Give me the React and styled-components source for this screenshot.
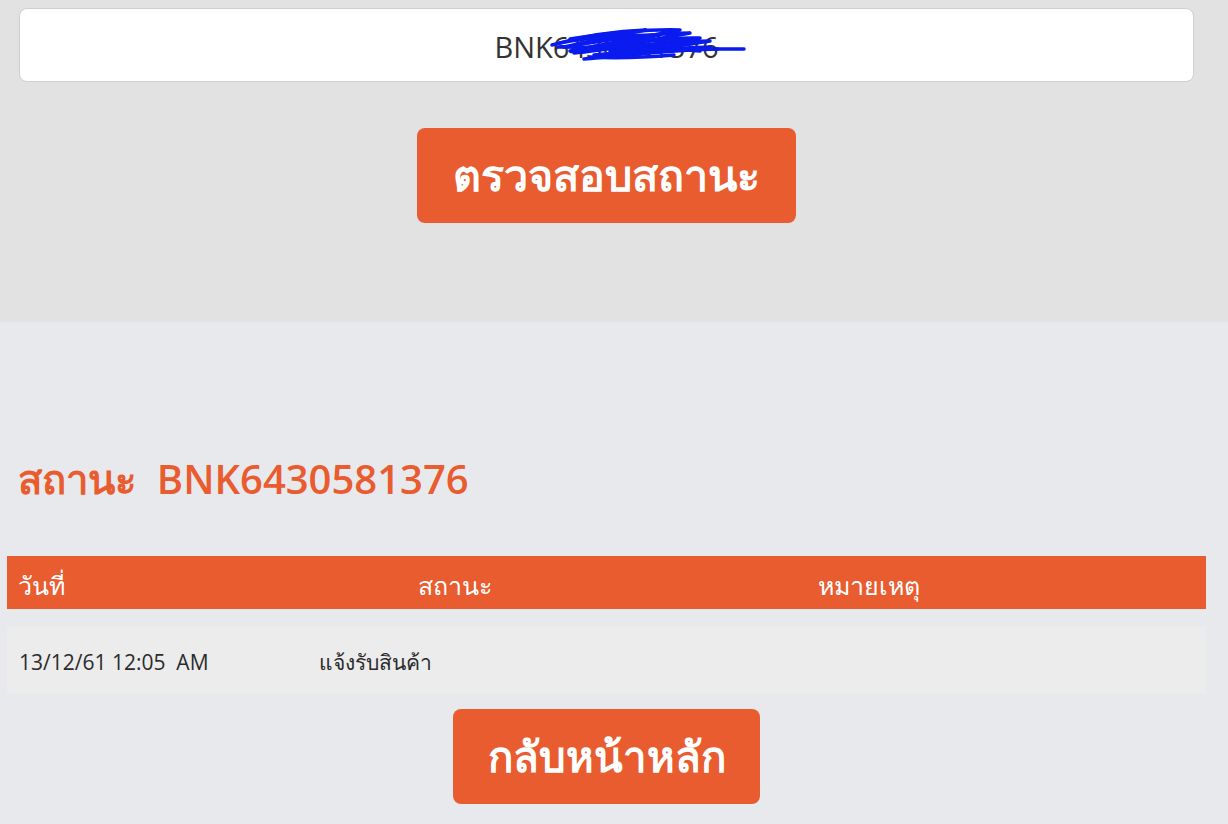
import React from 'react';
import styled, { createGlobalStyle } from 'styled-components';

const GlobalStyle = createGlobalStyle`
    html, body {
        margin: 0;
        padding: 0;
        background: #e8e9ec;
        font-family: "Open Sans", "Noto Sans", sans-serif;
    }
`
const SearchArea = styled.div`
    background: #e2e2e2;
    height: 322px;
    padding: 8px 34px 0 19px;
    box-sizing: border-box;
    display: flex;
    flex-direction: column;
    align-items: center;
`
const InputBox = styled.div`
    position: relative;
    width: 100%;
    height: 74px;
    box-sizing: border-box;
    background: #ffffff;
    border: 1px solid #cfcfcf;
    border-radius: 8px;
    display: flex;
    align-items: center;
    justify-content: center;
    font-size: 29px;
    color: #333333;
`
const InputText = styled.span`
    position: relative;
    padding-top: 2px;
`
const Scribble = styled.svg`
    position: absolute;
    left: 56px;
    top: 2px;
    width: 196px;
    height: 34px;
    overflow: visible;
`
const OrangeButton = styled.button`
    background: #e85c30;
    color: #ffffff;
    border: none;
    border-radius: 8px;
    height: 95px;
    width: ${p => p.$w}px;
    font-family: "Open Sans", "Noto Sans", sans-serif;
    font-weight: 700;
    font-size: ${p => p.$size}px;
    margin-top: ${p => p.$mt}px;
    padding: 0;
    cursor: pointer;
`
const ResultArea = styled.div`
    padding: 0 22px 0 7px;
    display: flex;
    flex-direction: column;
    align-items: center;
`
const Title = styled.h2`
    align-self: flex-start;
    margin: 126px 0 0 11px;
    height: 58px;
    font-size: 40px;
    font-weight: 600;
    color: #e85c30;
    white-space: pre;
`
const HeadRow = styled.div`
    width: 100%;
    margin-top: 50px;
    height: 53px;
    background: #e85c30;
    display: grid;
    grid-template-columns: 400px 400px 1fr;
    align-items: center;
`
const HeadCell = styled.div`
    padding: 6px 11px 0;
    font-size: 25px;
    color: #ffffff;
`
const BodyRow = styled.div`
    width: 100%;
    margin-top: 17px;
    height: 68px;
    background: #ececec;
    display: grid;
    grid-template-columns: 300px 1fr;
    align-items: center;
`
const BodyCell = styled.div`
    padding: 4px 12px 0;
    font-size: 21px;
    font-weight: 500;
    color: #2b2b2b;
    white-space: pre;
`

export default function App() {
    return (
        <>
            <GlobalStyle />
            <SearchArea>
                <InputBox>
                    <InputText>
                        BNK6430581376
                        <Scribble viewBox="0 0 196 34">
                            <g fill="none" stroke="#0a1bf0" strokeWidth="3.5" strokeLinecap="round" strokeLinejoin="round">
                                <path d="M2 18 C30 10 60 4 96 3 C70 8 40 14 14 20 C50 14 100 6 140 6 C110 12 60 20 24 26 C60 22 110 14 160 14 C120 20 70 28 34 32 C80 28 130 22 168 22" />
                                <path d="M20 12 C60 6 100 2 130 3 C100 9 60 16 30 22 C70 16 120 10 150 11 C120 16 80 24 50 30 C90 26 130 20 160 20" />
                                <path d="M10 16 C40 10 70 8 110 8 C80 14 50 18 20 24 C60 20 100 16 146 16 C110 22 70 26 44 28" />
                                <path d="M8 20 C50 20 110 22 194 22" />
                                <path d="M40 30 C70 32 100 30 124 28" />
                                <path d="M70 16 C90 14 110 12 130 14" />
                                <path d="M60 24 C80 22 110 20 150 24" />
                            </g>
                        </Scribble>
                    </InputText>
                </InputBox>
                <OrangeButton $w={379} $size={43} $mt={46}>ตรวจสอบสถานะ</OrangeButton>
            </SearchArea>
            <ResultArea>
                <Title>สถานะ  BNK6430581376</Title>
                <HeadRow>
                    <HeadCell>วันที่</HeadCell>
                    <HeadCell>สถานะ</HeadCell>
                    <HeadCell>หมายเหตุ</HeadCell>
                </HeadRow>
                <BodyRow>
                    <BodyCell>13/12/61 12:05  AM</BodyCell>
                    <BodyCell>แจ้งรับสินค้า</BodyCell>
                </BodyRow>
                <OrangeButton $w={307} $size={42} $mt={15}>กลับหน้าหลัก</OrangeButton>
            </ResultArea>
        </>
    )
}
